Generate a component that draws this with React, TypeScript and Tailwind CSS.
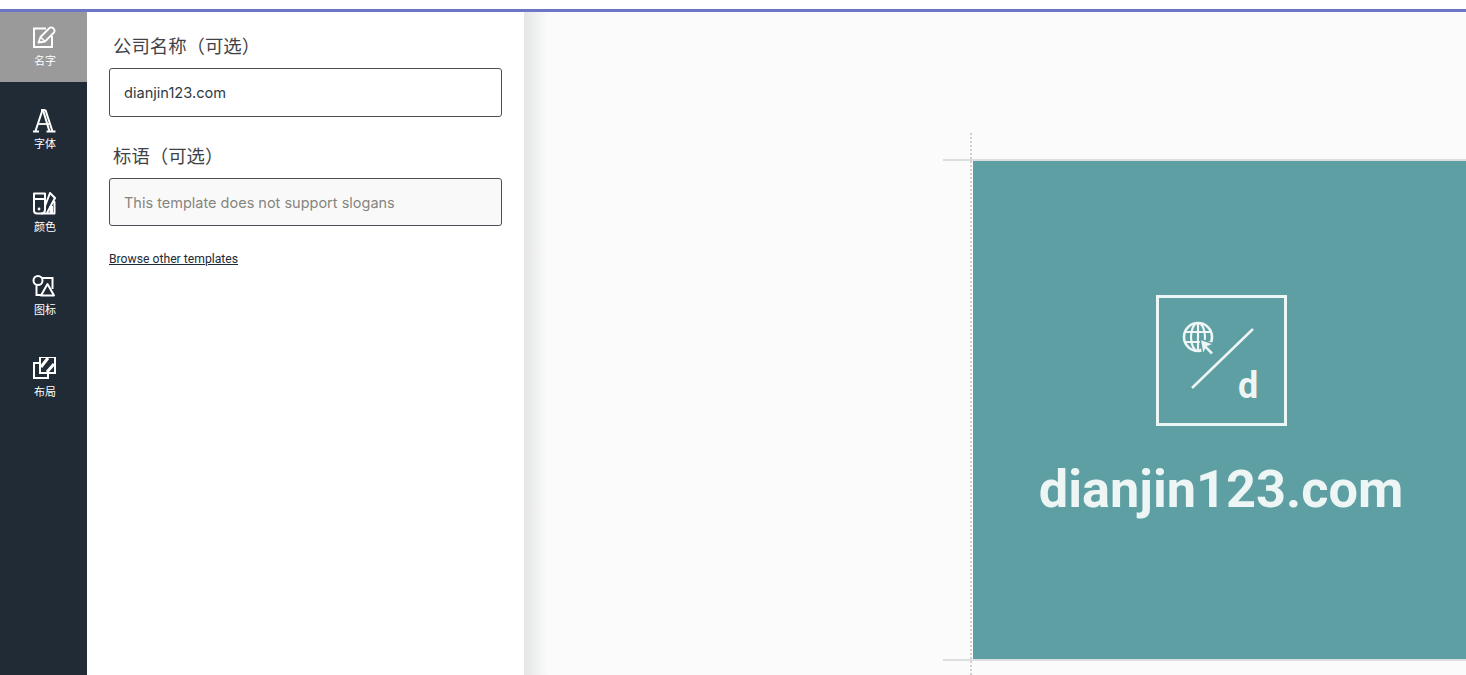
import React from "react";

const cjk = "font-['Noto_Sans_CJK_SC','Noto_Sans',sans-serif]";

function NameIcon() {
  return (
    <svg width="24" height="24" viewBox="0 0 24 24" fill="none" stroke="currentColor" strokeWidth="2">
      <path d="M14 2.500H2v18.500h18V10" />
      <path d="M6.500 16.500l2-5.500 8.500-8.500c1.500-1.500 3-1.500 4.500 0s1.500 3 0 4.500L13 15.500z" strokeLinejoin="round" strokeWidth="1.800" />
      <path d="M8.500 11l4.500 4.500" strokeWidth="1.500" />
    </svg>
  );
}

function FontIcon() {
  return (
    <svg width="24" height="24" viewBox="0 0 24 24" fill="none" stroke="currentColor">
      <path d="M9 1h4.500" strokeWidth="2" />
      <path d="M10.500 1L3.500 22" strokeWidth="2" />
      <path d="M11 1l6.500 21.500M13.500 1l7 21.500" strokeWidth="2" />
      <path d="M6 15h11" strokeWidth="1.800" />
      <path d="M1 22.500h6M14.500 22.500h9" strokeWidth="2" />
    </svg>
  );
}

function ColorIcon() {
  return (
    <svg width="24" height="24" viewBox="0 0 24 24" fill="none" stroke="currentColor" strokeWidth="2">
      <path d="M2 1.500h11v16c0 2.500-1.500 4-4 4H5c-2 0-3-1.500-3-3z" strokeLinejoin="round" />
      <path d="M2 7h11" />
      <path d="M9 21.500h13.500V10H20" strokeLinejoin="round" />
      <path d="M13 14L18 1l5 5-8 15" strokeLinejoin="round" />
      <path d="M17.500 14h3.500v7h-3.500z" fill="currentColor" stroke="none" />
      <circle cx="7" cy="17" r="1.400" fill="currentColor" stroke="none" />
    </svg>
  );
}

function ShapeIcon() {
  return (
    <svg width="24" height="24" viewBox="0 0 24 24" fill="none" stroke="currentColor" strokeWidth="2">
      <circle cx="6" cy="5.500" r="4.500" />
      <path d="M10 3h10.500v11M4.500 10.500V20H10" />
      <path d="M15.500 9L22 20.500H9z" strokeLinejoin="round" fill="#212b36" />
    </svg>
  );
}

function LayoutIcon() {
  return (
    <svg width="24" height="24" viewBox="0 0 24 24" fill="none" stroke="currentColor" strokeWidth="2">
      <path d="M8 6H2v15h14v-5" />
      <path d="M8 0h15v16H8z" />
      <path d="M9 10l7-9M15 15l7-8" strokeWidth="3" />
    </svg>
  );
}

function GlobeMark() {
  return (
    <svg width="131" height="131" viewBox="0 0 131 131" fill="none" stroke="#eef5f5">
      <rect x="1.500" y="1.500" width="128" height="128" strokeWidth="3" />
      <path d="M36 93L97 34" strokeWidth="2.500" />
      <circle cx="42" cy="42" r="14" strokeWidth="2.600" />
      <ellipse cx="42" cy="42" rx="7" ry="14" strokeWidth="2.200" />
      <path d="M42 28v28M29 37h26M29 47h26" strokeWidth="2.200" />
      <path d="M44 44l14 5-6 2.500 6 6-3 3-5.500-6-2.500 5.500z" fill="#eef5f5" stroke="#5d9fa2" strokeWidth="1.500" />
    </svg>
  );
}

const nav = [
  { label: "名字", icon: <NameIcon />, active: true },
  { label: "字体", icon: <FontIcon /> },
  { label: "颜色", icon: <ColorIcon /> },
  { label: "图标", icon: <ShapeIcon /> },
  { label: "布局", icon: <LayoutIcon />, up: true },
];

export default function App() {
  return (
    <div className="h-[675px] w-[1466px] overflow-hidden bg-white flex flex-col">
      <div className="h-[9px] shrink-0 bg-white" />
      <div className="h-[3px] shrink-0 bg-[#6b77c6]" />
      <div className="flex flex-1 min-h-0">
        <nav className="w-[87px] shrink-0 bg-[#212b36] flex flex-col gap-[13px] text-white">
          {nav.map((n) => (
            <div
              key={n.label}
              className={`h-[70px] flex flex-col items-center pl-px ${n.up ? "pt-[13px]" : "pt-[14px]"} ${n.active ? "bg-[#9a9a9a]" : ""}`}
            >
              {n.icon}
              <span className={`ml-[2px] mt-[2px] text-[11px] leading-[16px] ${cjk}`}>{n.label}</span>
            </div>
          ))}
        </nav>

        <aside className="w-[437px] shrink-0 bg-white pl-[22px] pr-[22px] pt-[19px] z-10">
          <label className={`block pl-[4px] text-[18.400px] leading-[28px] text-[#3f4347] ${cjk}`}>{"公司名称\uFF08可选\uFF09"}</label>
          <div className="mt-[9px] h-[49px] rounded-[3px] border border-[#4a4f55] flex items-center pl-[14px] pt-[2px] text-[14.6px] text-[#2f3a45] font-['Inter',sans-serif]">
            dianjin123.com
          </div>
          <label className={`mt-[24px] block pl-[4px] text-[18.400px] leading-[28px] text-[#3f4347] ${cjk}`}>{"标语\uFF08可选\uFF09"}</label>
          <div className="mt-[9px] h-[48px] rounded-[3px] border border-[#4a4f55] bg-[#f9f9f9] flex items-center pl-[14px] pt-[2px] text-[14.500px] text-[#85857f] font-['Inter',sans-serif]">
            This template does not support slogans
          </div>
          <a className="mt-[24px] inline-block text-[12.200px] leading-[18px] text-[#212b36] underline font-['Roboto',sans-serif]">
            Browse other templates
          </a>
        </aside>

        <main className="relative flex-1 min-w-0 overflow-hidden bg-[#fbfbfb] pl-[449px] pt-[149px]">
          <div className="absolute inset-y-0 left-0 w-[24px] bg-gradient-to-r from-[#e4e5e6] to-[#fbfbfb]" />
          <div className="absolute left-[446px] top-[121px] bottom-0 border-l-2 border-dotted border-[#d0d0d0]" />
          <div className="absolute left-[419px] top-[147px] right-0 border-t-2 border-[#dcdfdf]" />
          <div className="absolute left-[419px] top-[647px] right-0 border-t-2 border-[#dcdfdf]" />

          <div className="relative w-[496px] h-[498px] bg-[#5d9fa2] flex flex-col items-center pt-[134px]">
            <GlobeMark />
            <span className="absolute left-[265px] top-[203px] text-[36px] leading-[44px] font-bold text-[#eef5f5] font-['Roboto',sans-serif]">
              d
            </span>
            <div className="mt-[29px] text-[52.300px] leading-[68px] font-bold text-[#eef5f5] font-['Roboto',sans-serif] whitespace-nowrap">
              dianjin123.com
            </div>
          </div>
        </main>
      </div>
    </div>
  );
}
